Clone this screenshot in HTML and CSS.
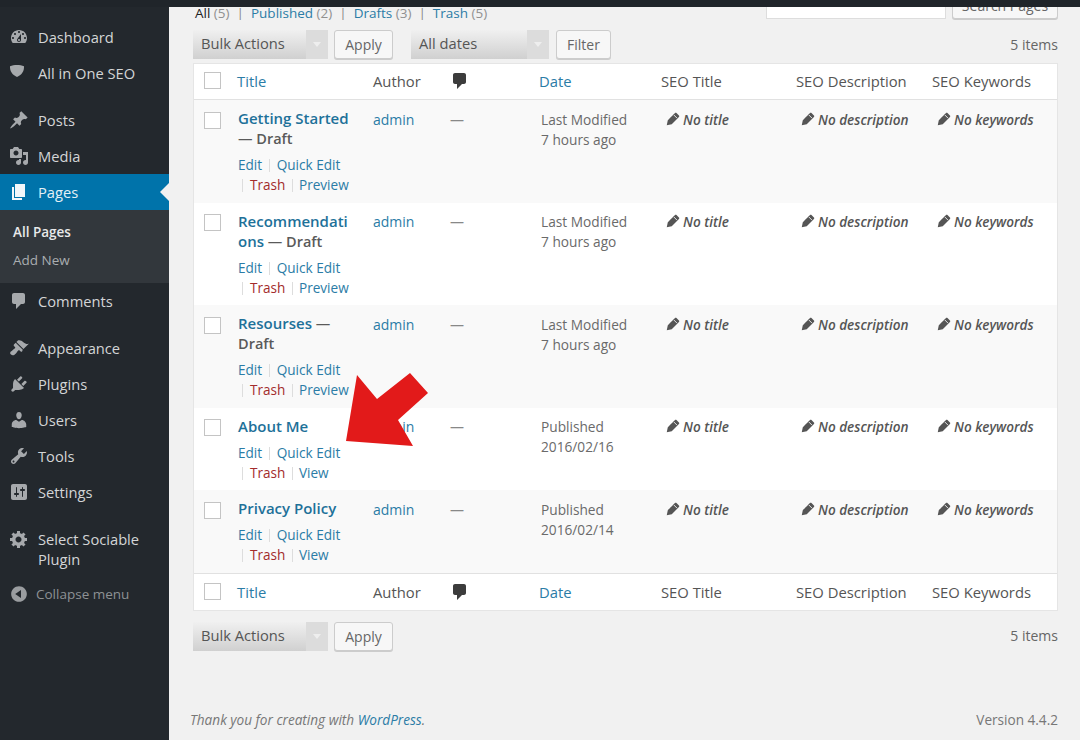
FILE: index.html
```html
<!DOCTYPE html>
<html lang="en">

<head>
  <meta charset="UTF-8">
  <meta name="viewport" content="width=device-width, initial-scale=1.0">
  <title>Pages</title>
  <link rel="stylesheet" href="styles.css">
</head>

<body>
  <svg class="sprite" xmlns="http://www.w3.org/2000/svg">
    <symbol id="i-dashboard" viewBox="0 0 20 20"><path d="M3.76 16h12.48c1.1-1.37 1.76-3.11 1.76-5 0-4.42-3.58-8-8-8s-8 3.58-8 8c0 1.89.66 3.63 1.76 5zM10 4c.55 0 1 .45 1 1s-.45 1-1 1-1-.45-1-1 .45-1 1-1zM6 6c.55 0 1 .45 1 1s-.45 1-1 1-1-.45-1-1 .45-1 1-1zm8 0c.55 0 1 .45 1 1s-.45 1-1 1-1-.45-1-1 .45-1 1-1zm-5.37 5.55L12 7v6c0 1.1-.9 2-2 2s-2-.9-2-2c0-.57.24-1.08.63-1.45zM4 10c.55 0 1 .45 1 1s-.45 1-1 1-1-.45-1-1 .45-1 1-1zm12 0c.55 0 1 .45 1 1s-.45 1-1 1-1-.45-1-1 .45-1 1-1zm-5 3c0-.55-.45-1-1-1s-1 .45-1 1 .45 1 1 1 1-.45 1-1z" /></symbol>
    <symbol id="i-shield" viewBox="0 0 20 20"><path d="M8 2c2.500 0 5 .4 7 1.200.2 4.800-2 8.500-7 10.800C3 11.700.8 8 1 3.200 3 2.400 5.500 2 8 2z" /></symbol>
    <symbol id="i-post" viewBox="0 0 20 20"><path d="M10.440 3.020l1.820-1.820 6.360 6.350-1.830 1.820c-1.050-.68-2.480-.57-3.410.36l-.75.75c-.92.93-1.040 2.350-.35 3.410l-1.830 1.820-2.410-2.410-2.800 2.790c-.42.42-3.380 2.710-3.800 2.290s1.860-3.390 2.280-3.810l2.790-2.790L4.100 9.360l1.830-1.820c1.050.69 2.480.57 3.400-.36l.75-.75c.93-.92 1.050-2.350.36-3.410z" /></symbol>
    <symbol id="i-media" viewBox="0 0 20 20"><path d="M13 11V4c0-.55-.45-1-1-1h-1.670L9 1H5L3.670 3H2c-.55 0-1 .45-1 1v7c0 .55.45 1 1 1h10c.55 0 1-.45 1-1zM7 4.500c1.380 0 2.500 1.120 2.500 2.500S8.380 9.500 7 9.500 4.500 8.380 4.500 7 5.620 4.500 7 4.500zM14 6h5v10.500c0 1.380-1.120 2.500-2.500 2.500S14 17.880 14 16.500s1.120-2.500 2.500-2.500c.17 0 .34.02.5.05V9h-3V6zm-4 8.050V13h2v3.500c0 1.380-1.120 2.500-2.500 2.500S7 17.880 7 16.500 8.120 14 9.500 14c.17 0 .34.02.5.05z" /></symbol>
    <symbol id="i-page" viewBox="0 0 20 20"><path d="M6 15V2h10v13H6zm-1 1h8v2H3V5h2v11z" /></symbol>
    <symbol id="i-comment" viewBox="0 0 20 20"><path d="M5 2h9c1.100 0 2 .9 2 2v7c0 1.100-.9 2-2 2h-2l-5 5v-5H5c-1.100 0-2-.9-2-2V4c0-1.100.9-2 2-2z" /></symbol>
    <symbol id="i-appearance" viewBox="0 0 20 20"><path d="M14.480 11.060L7.410 3.990l1.500-1.500c.5-.56 2.300-.47 3.510.32 1.210.8 1.430 1.280 2.910 2.100 1.180.64 2.450 1.260 4.450.85zm-.71.71L6.700 4.700 4.930 6.470c-.39.39-.39 1.020 0 1.410l1.060 1.060c.39.39.39 1.030 0 1.420-.6.6-1.430 1.110-2.210 1.690-.35.26-.7.53-1.010.84C1.430 13.230.4 15.010 2 16.570c1.600 1.550 3.360.51 4.670-.85.31-.31.58-.66.84-1.010.58-.78 1.100-1.610 1.690-2.210.39-.39 1.030-.39 1.420 0l1.060 1.060c.39.39 1.020.39 1.410 0z" /></symbol>
    <symbol id="i-plugin" viewBox="0 0 20 20"><path d="M13.110 4.360L9.870 7.600 8 5.730l3.240-3.240c.35-.34 1.050-.2 1.560.32.52.51.66 1.210.31 1.550zm-8 1.770l.91-1.120 9.010 9.010-1.190.84c-.71.71-2.630 1.160-3.820 1.160H6.140L4.900 17.260c-.59.59-1.540.59-2.120 0-.59-.58-.59-1.530 0-2.120l1.240-1.240v-3.880c0-1.130.4-3.190 1.090-3.890zm7.260 3.970l3.240-3.240c.34-.35 1.040-.21 1.550.31.52.51.66 1.210.31 1.550l-3.240 3.250z" /></symbol>
    <symbol id="i-users" viewBox="0 0 20 20"><path d="M10 9.250c-2.270 0-2.730-3.440-2.730-3.440C7 4.020 7.820 2 9.970 2c2.160 0 2.980 2.020 2.710 3.810 0 0-.41 3.440-2.680 3.440zm0 2.570L12.720 10c2.390 0 4.520 2.330 4.520 4.530v2.490s-3.650 1.130-7.240 1.130c-3.650 0-7.240-1.130-7.240-1.130v-2.490c0-2.250 1.940-4.480 4.470-4.480z" /></symbol>
    <symbol id="i-tools" viewBox="0 0 20 20"><path d="M16.680 9.770c-1.340 1.340-3.300 1.670-4.950.99l-5.410 6.520c-.99.99-2.590.99-3.580 0s-.99-2.590 0-3.570l6.520-5.420c-.68-1.650-.35-3.610.99-4.950 1.280-1.280 3.120-1.620 4.720-1.060l-2.890 2.890 2.820 2.820 2.860-2.870c.53 1.580.18 3.390-1.080 4.650zM3.810 16.210c.4.39 1.040.39 1.430 0 .4-.4.4-1.040 0-1.430-.39-.4-1.030-.4-1.430 0-.39.39-.39 1.030 0 1.430z" /></symbol>
    <symbol id="i-settings" viewBox="0 0 20 20"><path d="M18 16V4c0-1.100-.9-2-2-2H4c-1.100 0-2 .9-2 2v12c0 1.100.9 2 2 2h12c1.100 0 2-.9 2-2zM8 11h1c.55 0 1 .45 1 1s-.45 1-1 1H8v1.500c0 .28-.22.5-.5.5s-.5-.22-.5-.5V13H6c-.55 0-1-.45-1-1s.45-1 1-1h1V5.500c0-.28.22-.5.5-.5s.5.22.5.5V11zm5-2h-1c-.55 0-1-.45-1-1s.45-1 1-1h1V5.500c0-.28.22-.5.5-.5s.5.22.5.5V7h1c.55 0 1 .45 1 1s-.45 1-1 1h-1v5.500c0 .28-.22.5-.5.5s-.5-.22-.5-.5V9z" /></symbol>
    <symbol id="i-gear" viewBox="0 0 20 20"><path d="M18 12h-2.180c-.17.7-.44 1.350-.81 1.930l1.540 1.540-2.100 2.100-1.540-1.540c-.58.36-1.230.63-1.910.79V19H8v-2.180c-.68-.16-1.330-.43-1.910-.79l-1.540 1.540-2.120-2.120 1.540-1.540c-.36-.58-.63-1.230-.79-1.910H1V9.030h2.170c.16-.7.44-1.350.8-1.940L2.430 5.550l2.100-2.100 1.540 1.540c.58-.37 1.240-.64 1.930-.81V2h3v2.180c.68.16 1.330.43 1.910.79l1.540-1.540 2.120 2.120-1.540 1.540c.36.59.64 1.240.8 1.940H18V12zm-8.500 1.500c1.660 0 3-1.340 3-3s-1.340-3-3-3-3 1.340-3 3 1.340 3 3 3z" /></symbol>
    <symbol id="i-collapse" viewBox="0 0 20 20"><path d="M10 2.160c4.330 0 7.840 3.510 7.840 7.840s-3.510 7.840-7.840 7.840S2.160 14.330 2.160 10 5.710 2.160 10 2.160zm2 11.720V6.120L6.180 9.970z" /></symbol>
    <symbol id="i-pencil" viewBox="0 0 20 20"><path d="M13.890 3.390l2.710 2.720c.46.46.42 1.240.03 1.640l-8.010 8.020-5.560 1.160 1.160-5.580s7.600-7.630 7.990-8.030c.39-.39 1.220-.39 1.680.07z" /><line x1="11" y1="5.600" x2="14.400" y2="9" stroke="#f4f4f4" stroke-width="1" /></symbol>
  </svg>

  <div class="topbar"></div>

  <div class="layout">
    <nav class="sidebar">
      <ul class="menu">
        <li class="menu-item"><svg class="menu-icon"><use href="#i-dashboard" /></svg><span>Dashboard</span></li>
        <li class="menu-item"><svg class="menu-icon"><use href="#i-shield" /></svg><span>All in One SEO</span></li>
      </ul>
      <ul class="menu">
        <li class="menu-item"><svg class="menu-icon"><use href="#i-post" /></svg><span>Posts</span></li>
        <li class="menu-item"><svg class="menu-icon"><use href="#i-media" /></svg><span>Media</span></li>
        <li class="menu-item current"><svg class="menu-icon"><use href="#i-page" /></svg><span>Pages</span></li>
        <li class="submenu">
          <div class="submenu-item active">All Pages</div>
          <div class="submenu-item">Add New</div>
        </li>
        <li class="menu-item"><svg class="menu-icon"><use href="#i-comment" /></svg><span>Comments</span></li>
      </ul>
      <ul class="menu">
        <li class="menu-item"><svg class="menu-icon"><use href="#i-appearance" /></svg><span>Appearance</span></li>
        <li class="menu-item"><svg class="menu-icon"><use href="#i-plugin" /></svg><span>Plugins</span></li>
        <li class="menu-item"><svg class="menu-icon"><use href="#i-users" /></svg><span>Users</span></li>
        <li class="menu-item"><svg class="menu-icon"><use href="#i-tools" /></svg><span>Tools</span></li>
        <li class="menu-item"><svg class="menu-icon"><use href="#i-settings" /></svg><span>Settings</span></li>
      </ul>
      <ul class="menu">
        <li class="menu-item"><svg class="menu-icon"><use href="#i-gear" /></svg><span>Select Sociable Plugin</span></li>
        <li class="menu-item collapse"><svg class="menu-icon"><use href="#i-collapse" /></svg><span>Collapse menu</span></li>
      </ul>
    </nav>

    <main class="content">
      <div class="top-row">
        <ul class="subsub">
          <li class="current-view">All <span class="count">(5)</span></li>
          <li class="bar">|</li>
          <li><a href="#">Published</a> <span class="count">(2)</span></li>
          <li class="bar">|</li>
          <li><a href="#">Drafts</a> <span class="count">(3)</span></li>
          <li class="bar">|</li>
          <li><a href="#">Trash</a> <span class="count">(5)</span></li>
        </ul>
        <div class="search">
          <div class="search-input"></div>
          <div class="btn search-btn">Search Pages</div>
        </div>
      </div>

      <div class="toolbar">
        <div class="select bulk"><span class="select-label">Bulk Actions</span><span class="select-arrow"></span></div>
        <div class="btn apply">Apply</div>
        <div class="select dates"><span class="select-label">All dates</span><span class="select-arrow"></span></div>
        <div class="btn filter">Filter</div>
        <span class="items">5 items</span>
      </div>

      <table class="pages">
        <colgroup>
          <col class="c-cb">
          <col class="c-title">
          <col class="c-author">
          <col class="c-comments">
          <col class="c-date">
          <col class="c-seo">
          <col class="c-desc">
          <col class="c-keys">
        </colgroup>
        <thead>
          <tr>
            <th><input type="checkbox"></th>
            <th class="head-title"><a href="#">Title</a></th>
            <th>Author</th>
            <th><svg class="head-icon"><use href="#i-comment" /></svg></th>
            <th><a href="#">Date</a></th>
            <th>SEO Title</th>
            <th>SEO Description</th>
            <th>SEO Keywords</th>
          </tr>
        </thead>
        <tbody>
          <tr>
            <td><input type="checkbox"></td>
            <td class="title-cell">
              <a class="row-title" href="#">Getting Started</a> <strong>— Draft</strong>
              <div class="row-actions">
                <span><a href="#">Edit</a></span>
                <span><i class="sep"></i><a href="#">Quick Edit</a></span>
                <span><i class="sep"></i><a class="trash" href="#">Trash</a></span>
                <span><i class="sep"></i><a href="#">Preview</a></span>
              </div>
            </td>
            <td><a href="#">admin</a></td>
            <td class="no-comments">—</td>
            <td class="date-cell">Last Modified<br>7 hours ago</td>
            <td class="seo-cell"><svg class="pencil"><use href="#i-pencil" /></svg>No title</td>
            <td class="seo-cell"><svg class="pencil"><use href="#i-pencil" /></svg>No description</td>
            <td class="seo-cell"><svg class="pencil"><use href="#i-pencil" /></svg>No keywords</td>
          </tr>
          <tr>
            <td><input type="checkbox"></td>
            <td class="title-cell">
              <a class="row-title" href="#">Recommendations</a> <strong>— Draft</strong>
              <div class="row-actions">
                <span><a href="#">Edit</a></span>
                <span><i class="sep"></i><a href="#">Quick Edit</a></span>
                <span><i class="sep"></i><a class="trash" href="#">Trash</a></span>
                <span><i class="sep"></i><a href="#">Preview</a></span>
              </div>
            </td>
            <td><a href="#">admin</a></td>
            <td class="no-comments">—</td>
            <td class="date-cell">Last Modified<br>7 hours ago</td>
            <td class="seo-cell"><svg class="pencil"><use href="#i-pencil" /></svg>No title</td>
            <td class="seo-cell"><svg class="pencil"><use href="#i-pencil" /></svg>No description</td>
            <td class="seo-cell"><svg class="pencil"><use href="#i-pencil" /></svg>No keywords</td>
          </tr>
          <tr>
            <td><input type="checkbox"></td>
            <td class="title-cell">
              <a class="row-title" href="#">Resourses</a> <strong>— Draft</strong>
              <div class="row-actions">
                <span><a href="#">Edit</a></span>
                <span><i class="sep"></i><a href="#">Quick Edit</a></span>
                <span><i class="sep"></i><a class="trash" href="#">Trash</a></span>
                <span><i class="sep"></i><a href="#">Preview</a></span>
              </div>
            </td>
            <td><a href="#">admin</a></td>
            <td class="no-comments">—</td>
            <td class="date-cell">Last Modified<br>7 hours ago</td>
            <td class="seo-cell"><svg class="pencil"><use href="#i-pencil" /></svg>No title</td>
            <td class="seo-cell"><svg class="pencil"><use href="#i-pencil" /></svg>No description</td>
            <td class="seo-cell"><svg class="pencil"><use href="#i-pencil" /></svg>No keywords</td>
          </tr>
          <tr>
            <td><input type="checkbox"></td>
            <td class="title-cell">
              <a class="row-title" href="#">About Me</a>
              <div class="row-actions">
                <span><a href="#">Edit</a></span>
                <span><i class="sep"></i><a href="#">Quick Edit</a></span>
                <span><i class="sep"></i><a class="trash" href="#">Trash</a></span>
                <span><i class="sep"></i><a href="#">View</a></span>
              </div>
            </td>
            <td><a href="#">admin</a></td>
            <td class="no-comments">—</td>
            <td class="date-cell">Published<br>2016/02/16</td>
            <td class="seo-cell"><svg class="pencil"><use href="#i-pencil" /></svg>No title</td>
            <td class="seo-cell"><svg class="pencil"><use href="#i-pencil" /></svg>No description</td>
            <td class="seo-cell"><svg class="pencil"><use href="#i-pencil" /></svg>No keywords</td>
          </tr>
          <tr>
            <td><input type="checkbox"></td>
            <td class="title-cell">
              <a class="row-title" href="#">Privacy Policy</a>
              <div class="row-actions">
                <span><a href="#">Edit</a></span>
                <span><i class="sep"></i><a href="#">Quick Edit</a></span>
                <span><i class="sep"></i><a class="trash" href="#">Trash</a></span>
                <span><i class="sep"></i><a href="#">View</a></span>
              </div>
            </td>
            <td><a href="#">admin</a></td>
            <td class="no-comments">—</td>
            <td class="date-cell">Published<br>2016/02/14</td>
            <td class="seo-cell"><svg class="pencil"><use href="#i-pencil" /></svg>No title</td>
            <td class="seo-cell"><svg class="pencil"><use href="#i-pencil" /></svg>No description</td>
            <td class="seo-cell"><svg class="pencil"><use href="#i-pencil" /></svg>No keywords</td>
          </tr>
        </tbody>
        <tfoot>
          <tr>
            <th><input type="checkbox"></th>
            <th class="head-title"><a href="#">Title</a></th>
            <th>Author</th>
            <th><svg class="head-icon"><use href="#i-comment" /></svg></th>
            <th><a href="#">Date</a></th>
            <th>SEO Title</th>
            <th>SEO Description</th>
            <th>SEO Keywords</th>
          </tr>
        </tfoot>
      </table>

      <div class="toolbar bottom">
        <div class="select bulk"><span class="select-label">Bulk Actions</span><span class="select-arrow"></span></div>
        <div class="btn apply">Apply</div>
        <span class="items">5 items</span>
      </div>

      <footer class="page-footer">
        <em>Thank you for creating with <a href="#">WordPress</a>.</em>
        <span>Version 4.4.2</span>
      </footer>
    </main>
  </div>

  <!-- red arrow pasted over the screenshot -->
  <svg class="arrow" viewBox="0 0 1080 740">
    <polygon points="346,441 357,375 377,399 410,373 428,393 398,420 413,446" />
  </svg>
</body>

</html>
```

FILE: styles.css
```css
* {
  box-sizing: border-box;
}

html,
body {
  height: 100%;
}

body {
  font-family: 'Open Sans', sans-serif;
  font-size: 14.5px;
  line-height: 20px;
  margin: 0;
  background-color: #f1f1f1;
  color: #555;
  overflow: hidden;
  display: flex;
  flex-direction: column;
}

a {
  color: #2b7ca6;
  text-decoration: none;
}

ul {
  list-style: none;
  margin: 0;
  padding: 0;
}

.sprite {
  display: none;
}

.topbar {
  height: 7px;
  flex: none;
  background-color: #20252a;
}

.layout {
  flex: 1;
  display: flex;
  min-height: 0;
}

/* sidebar */
.sidebar {
  width: 169px;
  flex: none;
  padding-top: 12px;
  background-color: #23282d;
  color: #d3d5d6;
}

.menu {
  margin-bottom: 11px;
}

.menu-item {
  position: relative;
  display: flex;
  gap: 9px;
  padding: 8px 10px 8px 9px;
  font-size: 14.7px;
}

.menu-icon {
  width: 20px;
  height: 20px;
  flex: none;
  fill: #a6a9ac;
}

.menu-item.current {
  background-color: #0073aa;
  color: #e4f0f6;
}

.menu-item.current .menu-icon {
  fill: #f2f7fa;
}

.menu-item.current::after {
  content: '';
  position: absolute;
  right: 0;
  top: 9px;
  border: 9px solid transparent;
  border-right-color: #f1f1f1;
  border-left-width: 0;
}

.submenu {
  padding: 8px 0 9px;
  background-color: #32373c;
  font-size: 13.5px;
  color: #a9adb0;
}

.submenu-item {
  height: 28px;
  line-height: 28px;
  padding-left: 13px;
}

.submenu-item.active {
  color: #e8e9ea;
  font-weight: 600;
}

.collapse {
  margin-top: -1px;
  gap: 7px;
  font-size: 13.5px;
  color: #8d9194;
}

.collapse .menu-icon {
  fill: #9a9da0;
}

/* content */
.content {
  flex: 1;
  min-width: 0;
  display: flex;
  flex-direction: column;
  padding: 0 22px 10px 24px;
}

.top-row {
  height: 13px;
  flex: none;
  display: flex;
  justify-content: space-between;
  align-items: flex-end;
  overflow: hidden;
}

.subsub {
  display: flex;
  gap: 7px;
  padding-left: 2px;
  font-size: 13.5px;
  height: 20px;
  margin-bottom: -3px;
}

.current-view {
  color: #222;
}

.count {
  color: #909090;
}

.bar {
  color: #888;
}

.search {
  display: flex;
  gap: 6px;
  flex: none;
  margin-bottom: 1px;
}

.search-input {
  width: 180px;
  height: 28px;
  background-color: #fff;
  border: 1px solid #ddd;
}

.btn {
  height: 29px;
  line-height: 27px;
  text-align: center;
  font-size: 14px;
  color: #666;
  background-color: #f7f7f7;
  border: 1px solid #ccc;
  border-radius: 3px;
  box-shadow: 0 1px 0 #ccc;
}

.search-btn {
  width: 106px;
  height: 28px;
}

.toolbar {
  flex: none;
  display: flex;
  align-items: center;
  margin-top: 10px;
  height: 29px;
}

.toolbar.bottom {
  margin-top: 11px;
}

.select {
  display: flex;
  height: 29px;
}

.select-label {
  display: block;
  padding-left: 8px;
  line-height: 27px;
  font-size: 14.7px;
  color: #555;
  background: linear-gradient(#f0f0f0, #d0d0d0);
  flex: 1;
}

.select-arrow {
  position: relative;
  width: 22px;
  flex: none;
  background-color: #dcdcdc;
}

.select-arrow::after {
  content: '';
  position: absolute;
  left: 7px;
  top: 12px;
  border: 4px solid transparent;
  border-top: 5px solid #eee;
  border-bottom-width: 0;
}

.bulk {
  width: 135px;
}

.apply {
  width: 59px;
  margin-left: 6px;
}

.dates {
  width: 138px;
  margin-left: 18px;
}

.filter {
  width: 55px;
  margin-left: 7px;
}

.items {
  margin-left: auto;
  font-size: 14px;
  color: #666;
}

/* table */
.pages {
  width: 865px;
  flex: none;
  margin-top: 4px;
  border: 1px solid #e5e5e5;
  border-spacing: 0;
  table-layout: fixed;
  background-color: #fff;
  font-size: 14px;
}

.c-cb {
  width: 35px;
}

.c-title {
  width: 136px;
}

.c-author {
  width: 77px;
}

.c-comments {
  width: 89px;
}

.c-date {
  width: 122px;
}

.c-seo {
  width: 135px;
}

.c-desc {
  width: 136px;
}

.c-keys {
  width: 133px;
}

th,
td {
  padding: 9.5px 8px 7px;
  text-align: left;
  vertical-align: top;
  font-weight: 400;
}

th {
  font-size: 14.8px;
}

thead th {
  height: 36px;
  padding: 7px 8px 8px;
  border-bottom: 1px solid #e1e1e1;
}

tfoot th {
  height: 37px;
  padding: 8px 8px 7px;
  border-top: 1px solid #e1e1e1;
}

th:first-child,
td:first-child {
  padding-left: 10px;
  padding-right: 0;
}

tbody tr:nth-child(odd) {
  background-color: #f9f9f9;
}

input[type="checkbox"] {
  appearance: none;
  display: block;
  width: 17px;
  height: 17px;
  margin: 1px 0 0;
  background-color: #fff;
  border: 1px solid #c4c4c4;
}

td input[type="checkbox"] {
  margin-top: 2px;
}

.head-icon {
  display: block;
  width: 20px;
  height: 20px;
  fill: #3c3c3c;
}

.title-cell {
  padding: 9px 12px 7.5px 9px;
  overflow-wrap: anywhere;
  font-size: 14.5px;
}

.row-title {
  font-size: 15px;
  line-height: 1;
  font-weight: 600;
  color: #1e7199;
}

.title-cell strong {
  font-weight: 600;
  color: #5a5a5a;
}

.row-actions {
  margin-top: 6px;
  font-size: 13.6px;
}

.row-actions span {
  white-space: nowrap;
}

.sep {
  display: inline-block;
  width: 1px;
  height: 13px;
  margin: 0 7px 0 4px;
  vertical-align: -2px;
  background-color: #ddd;
}

.row-actions span:nth-child(2) .sep {
  margin-left: 3px;
}

.row-actions span:last-child .sep {
  margin: 0 6px 0 3px;
}

.trash {
  color: #a32c2c;
}

.no-comments {
  color: #888;
}

.date-cell {
  padding-left: 10px;
  font-size: 13.7px;
  color: #6a6a6a;
}

.seo-cell {
  padding-left: 11px;
  padding-right: 0;
  font-style: italic;
  font-weight: 600;
  font-size: 13.55px;
  color: #555;
  white-space: nowrap;
}

.pencil {
  width: 18px;
  height: 18px;
  margin-right: 1px;
  vertical-align: -3px;
  fill: #555;
}

/* footer */
.page-footer {
  margin-top: auto;
  margin-left: -3px;
  display: flex;
  justify-content: space-between;
  font-size: 13.6px;
  color: #777;
}

/* arrow */
.arrow {
  position: absolute;
  left: 0;
  top: 0;
  width: 1080px;
  height: 740px;
  pointer-events: none;
  fill: #e21a1a;
}
```
